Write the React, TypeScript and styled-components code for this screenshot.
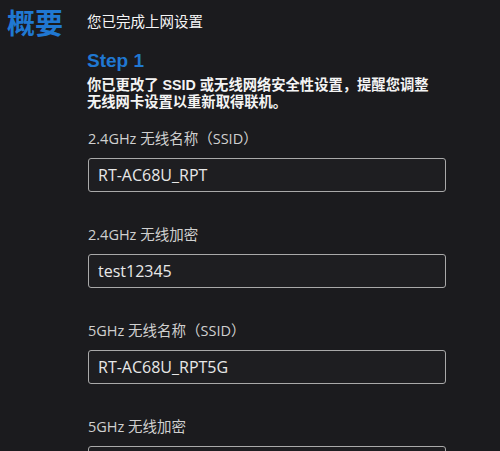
import styled, { createGlobalStyle } from "styled-components";

const Global = createGlobalStyle`
  html, body {
    margin: 0;
    padding: 0;
    background: #1b1b1e;
  }
  body {
    font-family: "Open Sans", "Noto Sans CJK SC", sans-serif;
    color: #e8e8e8;
  }
`;

const fields = [
  { label: "2.4GHz 无线名称（SSID）", value: "RT-AC68U_RPT" },
  { label: "2.4GHz 无线加密", value: "test12345" },
  { label: "5GHz 无线名称（SSID）", value: "RT-AC68U_RPT5G" },
  { label: "5GHz 无线加密", value: "test12345" },
];

export default function App() {
  return (
    <>
      <Global />
      <Page>
        <Title>概要</Title>
        <Content>
          <Subtitle>您已完成上网设置</Subtitle>
          <Step>Step 1</Step>
          <Notice>
            你已更改了 SSID 或无线网络安全性设置，提醒您调整
            <br />
            无线网卡设置以重新取得联机。
          </Notice>
          <Fields>
            {fields.map((f) => (
              <Field key={f.label}>
                <Label>{f.label}</Label>
                <Input defaultValue={f.value} />
              </Field>
            ))}
          </Fields>
        </Content>
      </Page>
    </>
  );
}

const Page = styled.div`
  display: grid;
  grid-template-columns: 87px 1fr;
  height: 451px;
  overflow: hidden;
  background: #1b1b1e;
`;

const Title = styled.h1`
  margin: 4px 0 0 7px;
  font-family: "Noto Sans CJK SC", sans-serif;
  font-size: 28px;
  line-height: 36px;
  font-weight: 700;
  color: #2078d2;
`;

const Content = styled.div`
  display: flex;
  flex-direction: column;
  padding-top: 11px;
`;

const Subtitle = styled.div`
  font-family: "Noto Sans CJK SC", sans-serif;
  font-size: 14.5px;
  line-height: 20px;
  font-weight: 400;
  color: #f6f6f6;
`;

const Step = styled.div`
  margin-top: 18px;
  font-family: "Liberation Sans", sans-serif;
  font-size: 19px;
  line-height: 24px;
  font-weight: 700;
  color: #2078d2;
`;

const Notice = styled.p`
  margin: 4px 0 0;
  font-family: "Liberation Sans", "Noto Sans CJK SC", sans-serif;
  font-size: 14.3px;
  line-height: 17px;
  font-weight: 700;
  color: #f4f4f4;
`;

const Fields = styled.div`
  display: flex;
  flex-direction: column;
  gap: 33px;
  margin-top: 18px;
`;

const Field = styled.div`
  display: flex;
  flex-direction: column;
  gap: 9px;
`;

const Label = styled.label`
  font-size: 14.5px;
  line-height: 20px;
  color: #d0d0d0;
  padding-left: 1px;
`;

const Input = styled.input`
  box-sizing: border-box;
  width: 358px;
  height: 34px;
  margin-left: 1px;
  padding: 0 9px;
  background: #1e1e21;
  border: 1.5px solid #a9a9a9;
  border-radius: 3px;
  color: #e8e8e8;
  font-family: "Open Sans", sans-serif;
  font-size: 16px;
  outline: none;
`;
